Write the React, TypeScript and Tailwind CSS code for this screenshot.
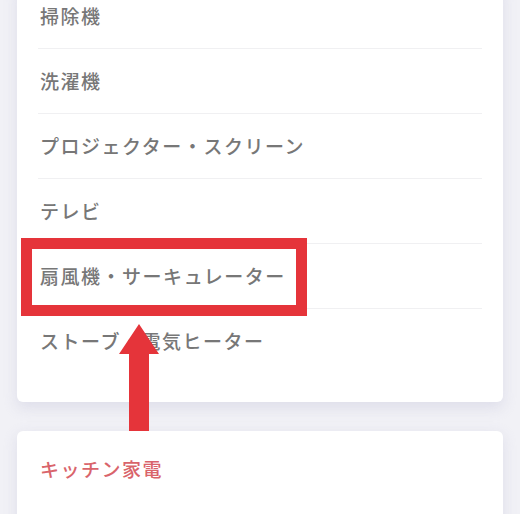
import React from 'react'

const items = [
  '掃除機',
  '洗濯機',
  'プロジェクター・スクリーン',
  'テレビ',
  '扇風機・サーキュレーター',
  'ストーブ・電気ヒーター',
]

export default function App() {
  return (
    <div
      className="relative h-[514px] w-[520px] overflow-hidden bg-[#f1f1f6]"
      style={{ fontFamily: '"Noto Sans CJK JP", "Noto Sans", sans-serif' }}
    >
      <div className="px-[17px]">
        {/* category list card */}
        <div className="-mt-[16px] rounded-b-[6px] bg-white px-[21px] pb-[28px] shadow-[0_6px_14px_rgba(200,200,220,0.45)]">
          {items.map((label, i) => (
            <div
              key={label}
              className={`flex h-[65px] items-center ${i < items.length - 1 ? 'border-b border-[#f0f0f2]' : ''}`}
            >
              <span className="pl-[2px] text-[19px] font-medium tracking-[0.08em] text-[#777777]">{label}</span>
            </div>
          ))}
        </div>

        {/* next section */}
        <div className="mt-[29px] h-[120px] rounded-[6px] bg-white px-[21px] pt-[24px] shadow-[0_4px_14px_rgba(200,200,220,0.45)]">
          <span className="pl-[2px] text-[19px] font-medium tracking-[0.08em] text-[#d9646b]">キッチン家電</span>
        </div>
      </div>

      {/* annotation: highlight box */}
      <div className="absolute left-[21px] top-[238px] h-[78px] w-[286px] border-[11px] border-[#e5343a]" />

      {/* annotation: arrow */}
      <svg className="absolute left-[118px] top-[324px]" width="42" height="107" viewBox="0 0 42 107">
        <polygon points="21,0 41,30 31,30 31,107 11,107 11,30 1,30" fill="#e5343a" />
      </svg>
    </div>
  )
}
